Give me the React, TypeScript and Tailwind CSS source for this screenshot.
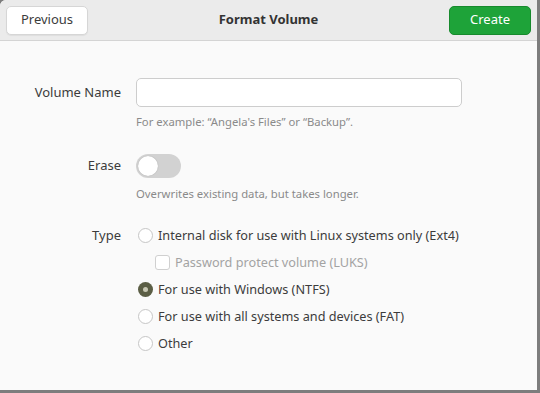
import React from 'react';

const font = { fontFamily: '"Noto Sans", "Open Sans", sans-serif' };

const Radio = ({ checked }: { checked?: boolean }) =>
  checked ? (
    <span className="flex h-[15px] w-[15px] shrink-0 items-center justify-center rounded-full bg-[#5b5e45]">
      <span className="h-[5px] w-[5px] rounded-full bg-[#c8c8b4]" />
    </span>
  ) : (
    <span className="h-[15px] w-[15px] shrink-0 rounded-full border border-[#c6c6c6] bg-white" />
  );

const Option = ({ label, checked }: { label: string; checked?: boolean }) => (
  <div className="flex h-[27px] items-center gap-[5px] pl-[2px]">
    <Radio checked={checked} />
    <span>{label}</span>
  </div>
);

export default function App() {
  return (
    <div className="h-[393px] w-[540px] bg-[#7d7d7d] pr-[3px] pb-[3px] text-[13px] text-[#3c3c3c]" style={font}>
      <div className="flex h-full w-full flex-col overflow-hidden rounded-tl-[6px] bg-[#fafafa]">
        {/* header bar */}
        <div className="flex h-[41px] shrink-0 items-center justify-between border-b border-[#d4d4d4] bg-[#ebebeb] px-[6px]">
          <button className="h-[29px] w-[82px] rounded-[5px] border border-[#d6d6d6] bg-white text-[13px] text-[#3c3c3c] shadow-[0_1px_1px_rgba(0,0,0,0.06)]">
            Previous
          </button>
          <div className="text-[13px] font-bold text-[#333]">Format Volume</div>
          <button className="h-[29px] w-[82px] rounded-[5px] border border-[#178a2d] bg-[#1ea339] text-[13px] text-white">
            Create
          </button>
        </div>

        {/* body */}
        <div className="grid grid-cols-[121px_1fr] gap-x-[15px] pt-[37px]">
          <div className="flex h-[29px] items-center justify-end">Volume Name</div>
          <div>
            <div className="h-[29px] w-[326px] rounded-[5px] border border-[#cdcdcd] bg-white" />
            <div className="mt-[7px] text-[11.3px] text-[#8a8a8a]">For example: “Angela's Files” or “Backup”.</div>
          </div>

          <div className="mt-[23px] flex h-[24px] items-center justify-end">Erase</div>
          <div className="mt-[23px]">
            <div className="flex h-[24px] w-[45px] items-center rounded-full bg-[#d2d2d2] p-[2px]">
              <span className="h-[20px] w-[20px] rounded-full bg-white shadow-[0_0_1px_rgba(0,0,0,0.3)]" />
            </div>
            <div className="mt-[8px] text-[11.3px] text-[#8a8a8a]">Overwrites existing data, but takes longer.</div>
          </div>

          <div className="mt-[19px] flex h-[27px] items-center justify-end">Type</div>
          <div className="mt-[19px] text-[12.7px]">
            <Option label="Internal disk for use with Linux systems only (Ext4)" />
            <div className="flex h-[27px] items-center gap-[5px] pl-[19px] text-[#a3a3a3]">
              <span className="h-[15px] w-[15px] shrink-0 rounded-[3px] border border-[#d0d0d0] bg-white" />
              <span>Password protect volume (LUKS)</span>
            </div>
            <Option label="For use with Windows (NTFS)" checked />
            <Option label="For use with all systems and devices (FAT)" />
            <Option label="Other" />
          </div>
        </div>
      </div>
    </div>
  );
}
